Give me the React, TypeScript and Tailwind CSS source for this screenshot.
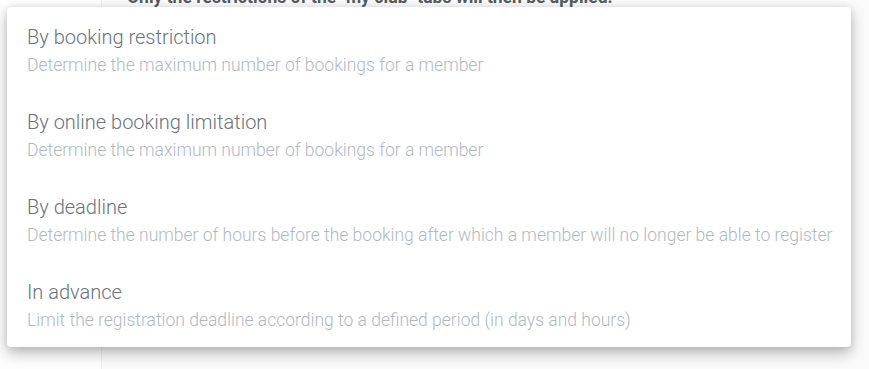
import React from 'react';

const options = [
  {
    title: 'By booking restriction',
    text: 'Determine the maximum number of bookings for a member',
  },
  {
    title: 'By online booking limitation',
    text: 'Determine the maximum number of bookings for a member',
  },
  {
    title: 'By deadline',
    text: 'Determine the number of hours before the booking after which a member will no longer be able to register',
  },
  {
    title: 'In advance',
    text: 'Limit the registration deadline according to a defined period (in days and hours)',
  },
];

export default function App() {
  return (
    <div className="relative flex h-[369px] w-full overflow-hidden bg-[#fafafa] font-['Roboto',sans-serif]">
      <div className="w-[102px] shrink-0 border-r border-[#eeeeee] bg-[#fdfdfd]" />
      <div className="flex-1 bg-[#fafafa] pl-[25px]">
        <p className="mt-[-13px] text-[17.5px] leading-[20px] font-bold text-[#555a60]">
          Only the restrictions of the "my club" tabs will then be applied.
        </p>
      </div>

      <div className="absolute top-[7px] left-[7px] w-[844px] rounded-[4px] bg-white shadow-[0_6px_14px_rgba(0,0,0,0.28),0_0_6px_rgba(0,0,0,0.08)]">
        {options.map((o) => (
          <div key={o.title} className="px-[20px] pt-[18px] pb-[15px]">
            <div className="text-[20px] leading-[24px] font-light text-[#68737f]">{o.title}</div>
            <div className="mt-[4px] text-[17.5px] leading-[24px] font-light whitespace-nowrap text-[#b0b9c3]">
              {o.text}
            </div>
          </div>
        ))}
      </div>
    </div>
  );
}
